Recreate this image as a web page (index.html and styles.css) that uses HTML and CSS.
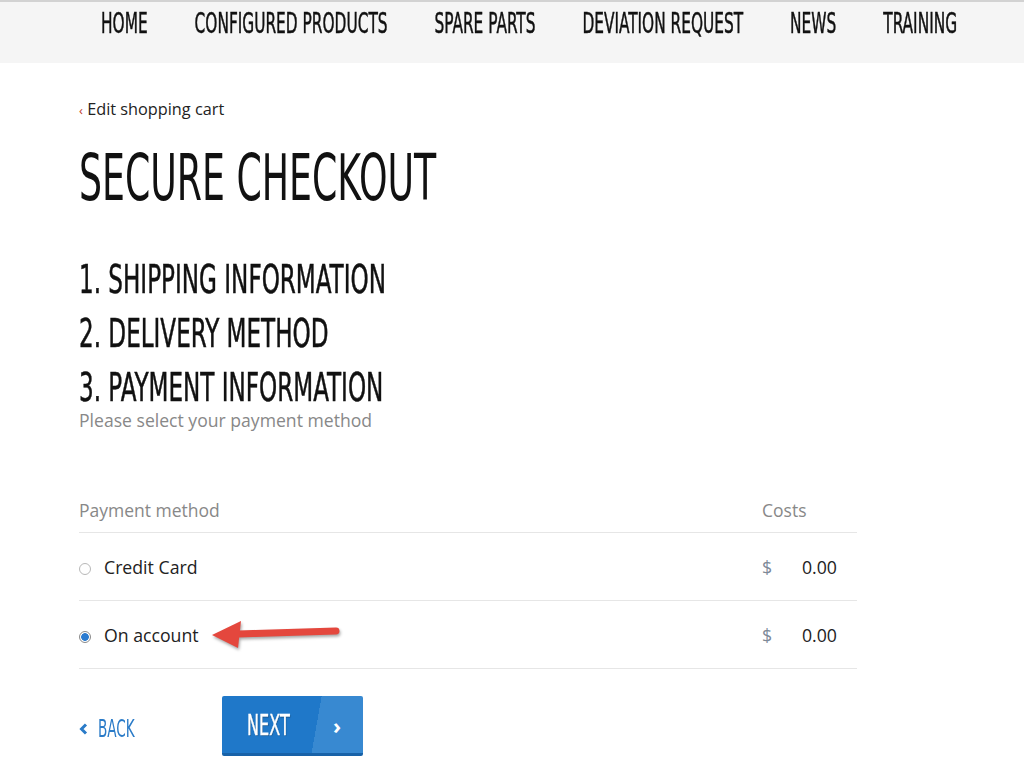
FILE: index.html
```html
<!DOCTYPE html>
<html lang="en">
<head>
<meta charset="utf-8">
<title>Secure Checkout</title>
<link rel="stylesheet" href="styles.css">
</head>
<body>
<header class="topnav">
  <ul class="nav-list">
    <li>HOME</li>
    <li>CONFIGURED PRODUCTS</li>
    <li>SPARE PARTS</li>
    <li>DEVIATION REQUEST</li>
    <li>NEWS</li>
    <li>TRAINING</li>
  </ul>
</header>
<main class="page">
  <a class="back-link" href="#"><span class="back-chev">‹</span> Edit shopping cart</a>
  <h1 class="title"><span class="cond-title">SECURE CHECKOUT</span></h1>
  <div class="steps">
    <h2 class="step"><span class="cond-step">1. SHIPPING INFORMATION</span></h2>
    <h2 class="step"><span class="cond-step">2. DELIVERY METHOD</span></h2>
    <h2 class="step"><span class="cond-step">3. PAYMENT INFORMATION</span></h2>
  </div>
  <p class="hint">Please select your payment method</p>
  <table class="pay-table">
    <thead>
      <tr><th class="col-method">Payment method</th><th class="col-cost" colspan="2">Costs</th></tr>
    </thead>
    <tbody>
      <tr>
        <td class="col-method"><span class="radio"></span>Credit Card</td>
        <td class="cur">$</td><td class="amt">0.00</td>
      </tr>
      <tr>
        <td class="col-method annotated"><span class="radio checked"></span>On account
          <svg class="arrow" width="150" height="40" viewBox="0 0 150 40">
            <line x1="30" y1="20" x2="128" y2="17" stroke="#e4473d" stroke-width="7" stroke-linecap="round"/>
            <polygon points="4,21 33,7 30,34" fill="#e4473d"/>
          </svg>
        </td>
        <td class="cur">$</td><td class="amt">0.00</td>
      </tr>
    </tbody>
  </table>
  <div class="actions">
    <a class="btn-back" href="#">
      <svg class="back-icon" width="9" height="12" viewBox="0 0 9 12"><polyline points="7,1.5 2.5,6 7,10.5" fill="none" stroke="#2a7bc8" stroke-width="3"/></svg>
      <span class="back-label">BACK</span>
    </a>
    <a class="btn-next" href="#"><span class="next-label">NEXT</span><span class="next-arrow">›</span></a>
  </div>
</main>
</body>
</html>
```
FILE: styles.css
```css
html, body {
  margin: 0;
  padding: 0;
  background: #ffffff;
}
body {
  font-family: "Open Sans", "DejaVu Sans", sans-serif;
  color: #222;
}
.topnav {
  background: #f5f5f5;
  border-top: 2px solid #d2d2d2;
  height: 61px;
  overflow: hidden;
}
.nav-list {
  list-style: none;
  margin: 0;
  padding: 0;
  display: flex;
  gap: 77px;
  margin-left: 101px;
  margin-top: 8px;
  transform: scaleX(0.61);
  transform-origin: left top;
  font-family: "Liberation Sans Narrow", "DejaVu Sans Condensed", sans-serif;
  font-size: 28px;
  line-height: 28px;
  color: #111;
  -webkit-text-stroke: 0.5px #111;
  white-space: nowrap;
}
.page {
  padding-left: 79px;
}
.back-link {
  display: block;
  margin-top: 36px;
  font-size: 16.3px;
  line-height: 20px;
  color: #222;
  text-decoration: none;
}
.back-chev {
  color: #c0392b;
  font-size: 13px;
}
.cond-title,
.cond-step {
  display: inline-block;
  transform-origin: left center;
  white-space: nowrap;
}
.cond-title {
  transform: scaleX(0.63);
}
.cond-step {
  transform: scaleX(0.658);
  -webkit-text-stroke: 0.5px #111;
}
.title {
  margin: 26px 0 0 0;
  font-family: "Liberation Sans Narrow", "DejaVu Sans Condensed", sans-serif;
  font-weight: normal;
  font-size: 64px;
  line-height: 64px;
  color: #111;
}
.steps {
  margin-top: 43px;
}
.step {
  margin: 0;
  font-family: "Liberation Sans Narrow", "DejaVu Sans Condensed", sans-serif;
  font-weight: normal;
  font-size: 39px;
  line-height: 54px;
  color: #111;
}
.hint {
  margin: -7px 0 0 0;
  font-size: 17.6px;
  line-height: 24px;
  color: #888;
}
.pay-table {
  margin-top: 66px;
  width: 778px;
  border-collapse: collapse;
}
.pay-table th {
  font-weight: normal;
  font-size: 17.5px;
  color: #888;
  text-align: left;
  padding: 0 0 10px 0;
  border-bottom: 1px solid #e6e6e6;
}
.pay-table td {
  height: 67px;
  border-bottom: 1px solid #e6e6e6;
  font-size: 17.7px;
  color: #222;
  padding: 0;
}
.pay-table th.col-cost {
  width: 95px;
}
.pay-table td.cur {
  width: 30px;
  color: #7d8998;
}
.pay-table td.amt {
  text-align: right;
  padding-right: 20px;
  width: 45px;
}
.radio {
  display: inline-block;
  width: 12px;
  height: 12px;
  border: 1px solid #b8b8b8;
  border-radius: 50%;
  margin-right: 13px;
  vertical-align: -1px;
  box-sizing: border-box;
  background: #fff;
}
.radio.checked {
  border-color: #8a8a8a;
  background: radial-gradient(circle, #2a7bd0 0 3.5px, #fff 4.2px);
}
.annotated {
  position: relative;
}
.arrow {
  position: absolute;
  left: 129px;
  top: 13px;
  filter: drop-shadow(1px 2px 1.5px rgba(0,0,0,0.35));
}
.actions {
  display: flex;
  align-items: center;
  margin-top: 27px;
}
.btn-back {
  width: 143px;
  display: flex;
  align-items: center;
  font-family: "Liberation Sans Narrow", "DejaVu Sans Condensed", sans-serif;
  font-size: 24px;
  color: #2a7bc8;
  text-decoration: none;
  padding-top: 6px;
}
.back-icon {
  display: block;
  margin-right: 10px;
}
.back-label {
  display: inline-block;
  transform: scaleX(0.63);
  transform-origin: left center;
}
.btn-next {
  display: flex;
  width: 141px;
  height: 57px;
  border-bottom: 3px solid #1862a8;
  border-radius: 2px;
  background: linear-gradient(100deg, #1f78c9 0 66%, #3889d1 66% 100%);
  color: #fff;
  text-decoration: none;
  align-items: center;
}
.next-label {
  font-family: "Liberation Sans Narrow", "DejaVu Sans Condensed", sans-serif;
  font-size: 27.5px;
  display: inline-block;
  transform: scaleX(0.65);
  transform-origin: left center;
  margin-left: 25px;
  width: 86px;
  -webkit-text-stroke: 0.4px #fff;
  text-shadow: 1px 1px 1px rgba(0,0,0,0.35);
}
.next-arrow {
  font-size: 22px;
  font-weight: bold;
}
```
